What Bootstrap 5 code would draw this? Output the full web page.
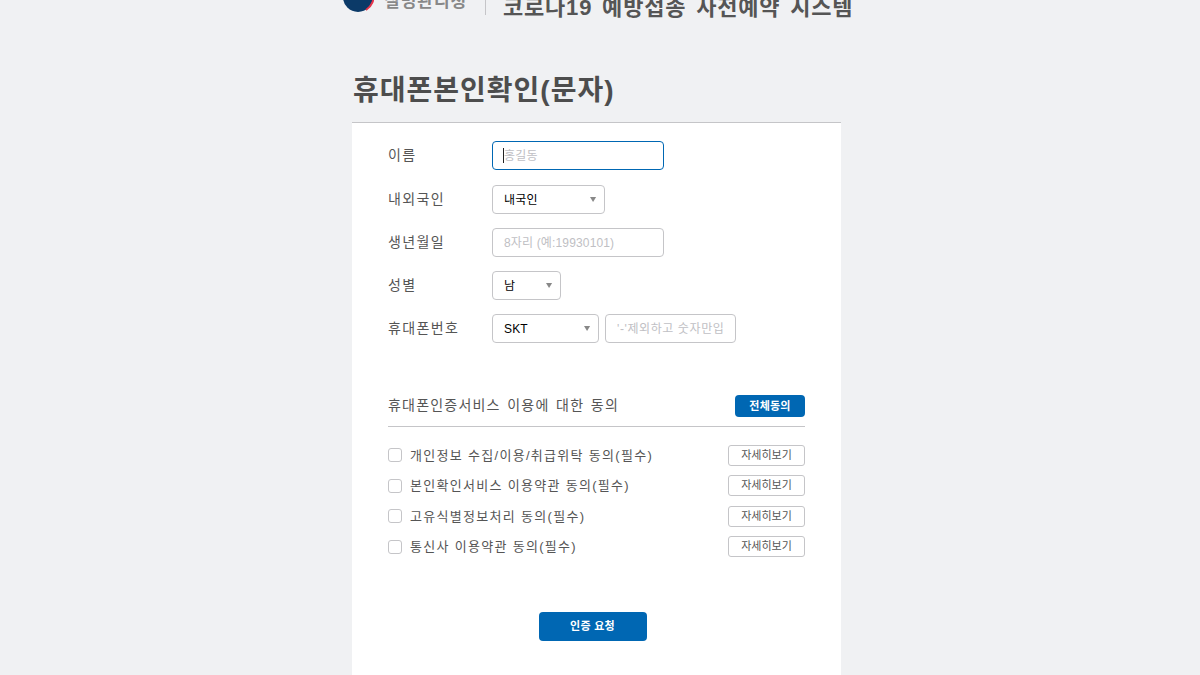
<!DOCTYPE html>
<html lang="ko">
<head>
<meta charset="utf-8">
<title>휴대폰본인확인</title>
<link href="https://cdn.jsdelivr.net/npm/bootstrap@5.3.0/dist/css/bootstrap.min.css" rel="stylesheet">
<style>
html,body{height:100%;overflow:hidden}
body{background:#f0f1f3;font-family:"Liberation Sans","Noto Sans CJK KR",sans-serif;color:#555;font-size:14px}
.shell{width:489px;margin:-22px 0 0 352px}
.site-head{height:144px}
.brand-row{height:44px;margin-left:-10px}
.logo-mark{width:32px;height:32px;flex:none;margin-top:3px}
.logo-name{font-size:17px;font-weight:700;color:#888;margin:11px 0 0 10px;width:86px;flex:none;white-space:nowrap;letter-spacing:1px}
.vbar{width:1px;flex:none;height:22px;background:#c5c5c8;margin:15px 18px 0 15px}
.sys-title{font-size:22px;font-weight:700;color:#555;white-space:nowrap;flex:none;line-height:1.2;margin:17px 0 0 -1px;letter-spacing:.8px;word-spacing:3px}
.page-title{font-size:28px;font-weight:700;color:#4d4d4d;margin:0 0 0 1px;line-height:1;padding-top:55px;letter-spacing:1px}
.panel{background:#fff;border-top:1px solid #c5c5c8;padding:18px 36px 0;height:553px}
.frow{height:29px;margin-bottom:14px}
.frow:first-child{margin-bottom:15px}
.flabel{width:104px;flex:none;color:#555;font-size:14px;letter-spacing:1.4px}
.fld{height:29px;border:1px solid #c5c5c8;border-radius:4px;font-size:12px;padding:0 11px;box-shadow:none;color:#000;background-color:#fff;min-height:0;line-height:1}
.fld::placeholder{color:#c0c0c4;opacity:1;letter-spacing:.15px}
.fld:focus{border-color:#0067b3;box-shadow:none}
.name-wrap{width:172px}
.text-caret{position:absolute;left:11px;top:7px;width:1px;height:15px;background:#222}
.w-name{width:172px}
.w-nat{width:113px}
.w-sex{width:69px}
.w-tel{width:107px}
.w-num{width:131px;margin-left:6px}
.w-num::placeholder{letter-spacing:.6px}
.pick{background-image:url("data:image/svg+xml,%3Csvg xmlns='http://www.w3.org/2000/svg' width='8' height='5'%3E%3Cpath d='M0 0h7L3.500 5z' fill='%23888'/%3E%3C/svg%3E");background-size:7px 5px;background-position:right 7px center;padding:0 20px 0 11px;letter-spacing:.15px}
.pick:focus{border-color:#c5c5c8}
.agree-head{margin-top:52px;height:32px;border-bottom:1px solid #c5c5c8;padding-bottom:10px}
.agree-title{font-size:14px;color:#555;letter-spacing:1.2px;word-spacing:1.500px}
.all-btn{width:70px;height:22px;padding:0;background:#0067b3;border:0;border-radius:4px;color:#fff;font-size:11px;font-weight:700;line-height:22px;letter-spacing:.2px}
.agree-list{margin-top:13px}
.agree-item{height:30.500px}
.agree-item .form-check-input{width:14px;height:14px;margin:0 8px 0 0;border:1px solid #c5c5c8;border-radius:3px;flex:none}
.agree-item label{font-size:13px;color:#555;letter-spacing:1.3px}
.more-btn{width:77px;height:21px;padding:0;background:#fff;border:1px solid #c5c5c8;border-radius:3px;font-size:11px;color:#555;line-height:19px}
.send-btn{width:108px;height:29px;padding:0;background:#0067b3;border:0;border-radius:4px;color:#fff;font-size:11px;font-weight:700;letter-spacing:.3px}
.send-wrap{margin-top:50px;padding-right:8px}
</style>
</head>
<body>
<div class="shell">
  <header class="site-head">
    <div class="brand-row d-flex align-items-start">
      <svg class="logo-mark" viewBox="0 0 32 32" aria-hidden="true"><circle cx="16" cy="16" r="15" fill="#0b3a68"/><path d="M31 12A15.500 15.500 0 0 1 24 29" fill="none" stroke="#e4344a" stroke-width="2"/></svg>
      <span class="logo-name">질병관리청</span>
      <span class="vbar"></span>
      <span class="sys-title">코로나19 예방접종 사전예약 시스템</span>
    </div>
    <h1 class="page-title">휴대폰본인확인(문자)</h1>
  </header>
  <main class="panel">
    <form>
      <div class="frow d-flex align-items-center"><label class="flabel" for="nm">이름</label><div class="name-wrap position-relative"><input id="nm" class="form-control fld w-name" placeholder="홍길동" autofocus><span class="text-caret"></span></div></div>
      <div class="frow d-flex align-items-center"><label class="flabel" for="nat">내외국인</label><select id="nat" class="form-select fld pick w-nat"><option>내국인</option><option>외국인</option></select></div>
      <div class="frow d-flex align-items-center"><label class="flabel" for="bd">생년월일</label><input id="bd" class="form-control fld w-name" placeholder="8자리 (예:19930101)"></div>
      <div class="frow d-flex align-items-center"><label class="flabel" for="sx">성별</label><select id="sx" class="form-select fld pick w-sex"><option>남</option><option>여</option></select></div>
      <div class="frow d-flex align-items-center"><label class="flabel" for="tl">휴대폰번호</label><select id="tl" class="form-select fld pick w-tel"><option>SKT</option><option>KT</option><option>LGU+</option></select><input class="form-control fld w-num" placeholder="'-'제외하고 숫자만입"></div>
      <div class="agree-head d-flex justify-content-between align-items-center"><span class="agree-title">휴대폰인증서비스 이용에 대한 동의</span><button type="button" class="btn all-btn">전체동의</button></div>
      <div class="agree-list">
        <div class="agree-item d-flex align-items-center justify-content-between"><div class="d-flex align-items-center"><input class="form-check-input" type="checkbox" id="a1"><label for="a1">개인정보 수집/이용/취급위탁 동의(필수)</label></div><button type="button" class="btn more-btn">자세히보기</button></div>
        <div class="agree-item d-flex align-items-center justify-content-between"><div class="d-flex align-items-center"><input class="form-check-input" type="checkbox" id="a2"><label for="a2">본인확인서비스 이용약관 동의(필수)</label></div><button type="button" class="btn more-btn">자세히보기</button></div>
        <div class="agree-item d-flex align-items-center justify-content-between"><div class="d-flex align-items-center"><input class="form-check-input" type="checkbox" id="a3"><label for="a3">고유식별정보처리 동의(필수)</label></div><button type="button" class="btn more-btn">자세히보기</button></div>
        <div class="agree-item d-flex align-items-center justify-content-between"><div class="d-flex align-items-center"><input class="form-check-input" type="checkbox" id="a4"><label for="a4">통신사 이용약관 동의(필수)</label></div><button type="button" class="btn more-btn">자세히보기</button></div>
      </div>
      <div class="send-wrap text-center"><button type="button" class="btn send-btn">인증 요청</button></div>
    </form>
  </main>
</div>
<script src="https://cdn.jsdelivr.net/npm/bootstrap@5.3.0/dist/js/bootstrap.bundle.min.js"></script>
</body>
</html>
